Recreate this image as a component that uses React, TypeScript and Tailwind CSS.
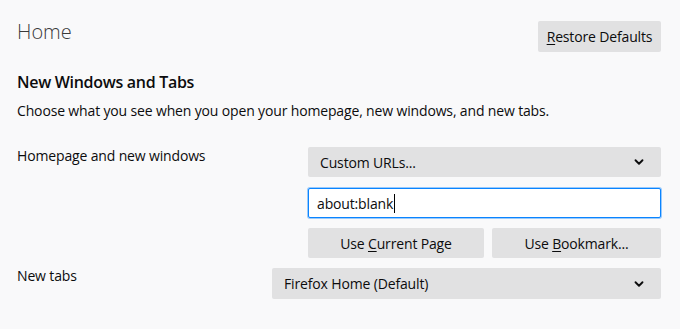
import { ChevronDown } from 'lucide-react';

function Select({ label, className }: { label: string; className: string }) {
  return (
    <div className={`flex items-center justify-between bg-[#e1e1e2] rounded-[2px] pl-3 pr-[15px] text-[14px] tracking-[-0.15px] text-[#0c0c0d] ${className}`}>
      <span>{label}</span>
      <ChevronDown size={14} strokeWidth={3.2} />
    </div>
  );
}

export default function App() {
  return (
    <div className="w-[680px] h-[329px] bg-[#f9f9fa] text-[#0c0c0d] pl-[17px] pr-[19px] pt-[21px]" style={{ fontFamily: '"Open Sans", "Noto Sans", sans-serif' }}>
      {/* header */}
      <div className="flex justify-between items-start">
        <h1 className="text-[20px] font-light leading-[26px] mt-[-2px] text-[#3a3a3a]">Home</h1>
        <button className="h-[31px] w-[123px] bg-[#e1e1e2] rounded-[2px] text-[14px] tracking-[-0.15px]">
          <span className="underline underline-offset-2">R</span>estore Defaults
        </button>
      </div>

      <h2 className="mt-[20px] text-[16px] tracking-[-0.3px] font-semibold leading-[20px]">New Windows and Tabs</h2>
      <p className="mt-[9px] text-[14px] tracking-[-0.15px] leading-[20px]">Choose what you see when you open your homepage, new windows, and new tabs.</p>

      {/* homepage row */}
      <div className="flex mt-[26px]">
        <div className="flex-1 text-[14px] tracking-[-0.15px] leading-[20px] -mt-[1px]">Homepage and new windows</div>
        <div className="w-[353px] flex flex-col gap-[10px]">
          <Select label="Custom URLs..." className="h-[30px]" />
          <div className="h-[30px] my-[1px] bg-white border border-[#0a84ff] ring-1 ring-[#0a84ff]/40 rounded-[2px] flex items-center px-[8px] text-[14px] tracking-[-0.15px]">
            about:blank<span className="w-px h-[19px] bg-black ml-[1px]" />
          </div>
          <div className="flex gap-2 -mt-[1px]">
            <button className="h-[30px] w-[176px] bg-[#e1e1e2] rounded-[2px] text-[14px] tracking-[-0.15px]">
              Use <span className="underline underline-offset-2">C</span>urrent Page
            </button>
            <button className="h-[30px] flex-1 bg-[#e1e1e2] rounded-[2px] text-[14px] tracking-[-0.15px]">
              Use <span className="underline underline-offset-2">B</span>ookmark...
            </button>
          </div>
        </div>
      </div>

      {/* new tabs row */}
      <div className="flex mt-[10px]">
        <div className="flex-1 text-[14px] tracking-[-0.15px] leading-[20px] -mt-[2px]">New tabs</div>
        <Select label="Firefox Home (Default)" className="w-[389px] h-[31px]" />
      </div>
    </div>
  );
}
